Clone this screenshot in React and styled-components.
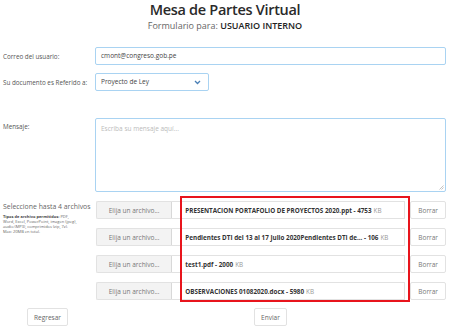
import React from "react";
import styled, { createGlobalStyle } from "styled-components";

const Global = createGlobalStyle`
  html, body { margin: 0; padding: 0; background: #fff; }
  body { font-family: "Open Sans", "Noto Sans", Arial, sans-serif; color: #555; }
  * { box-sizing: border-box; }
`;

const Page = styled.div`
  width: 450px;
  height: 334px;
  position: relative;
  overflow: hidden;
`;

const Header = styled.header`
  text-align: center;
`;

const Title = styled.h1`
  margin: 0;
  font-size: 14.5px;
  letter-spacing: -0.3px;
  line-height: 20px;
  font-weight: 600;
  color: #2a2a2a;
`;

const Subtitle = styled.div`
  font-size: 9px;
  line-height: 12.3px;
  color: #666;
  b { color: #222; font-weight: 600; }
`;

const Form = styled.div`
  display: grid;
  grid-template-columns: 95px 351px;
  margin-top: 15px;
`;

const Label = styled.div`
  padding-left: 3px;
  font-size: 6.3px;
  line-height: 9px;
  color: #555;
  padding-top: ${(p) => p.$pt || 0}px;
  margin-top: ${(p) => p.$mt || 0}px;
`;

const Cell = styled.div`
  margin-top: ${(p) => p.$mt || 0}px;
`;

const Input = styled.div`
  height: 18px;
  border: 1px solid #a9d3f2;
  border-radius: 2px;
  font-size: 6.5px;
  line-height: 16px;
  padding-left: 5px;
  color: #444;
  width: ${(p) => p.$w || "100%"};
  display: flex;
  align-items: center;
  justify-content: space-between;
  padding-right: 7px;
`;

const TextArea = styled.div`
  height: 74px;
  border: 1px solid #a9d3f2;
  border-radius: 2px;
  font-size: 6.5px;
  padding: 5px 5px;
  color: #bbb;
  position: relative;
`;

const Grip = styled.svg`
  position: absolute;
  right: 1px;
  bottom: 1px;
`;

const FilesLabel = styled.div`
  padding-left: 3px;
  margin-top: 10px;
`;

const FilesTitle = styled.div`
  font-size: 6.9px;
  line-height: 10px;
  color: #666;
  white-space: nowrap;
`;

const FineText = styled.div`
  margin-top: 3px;
  font-size: 4px;
  line-height: 4.8px;
  color: #666;
  white-space: nowrap;
  b { color: #444; font-weight: 700; }
`;

const FileList = styled.div`
  margin-top: 9px;
  display: flex;
  flex-direction: column;
  gap: 9px;
  position: relative;
`;

const FileRow = styled.div`
  display: flex;
  height: 18px;
`;

const ChooseBtn = styled.div`
  width: 77px;
  margin-left: 1px;
  background: #f3f3f3;
  border: 1px solid #e2e2e2;
  border-right: 1px solid #d8d8d8;
  border-radius: 2px 0 0 2px;
  font-size: 6.5px;
  color: #777;
  display: flex;
  align-items: center;
  justify-content: center;
`;

const NameBox = styled.div`
  width: 235px;
  border: 1px solid #e2e2e2;
  border-left: none;
  padding-left: 13px;
  font-size: 6.3px;
  font-weight: 700;
  color: #333;
  display: flex;
  align-items: center;
  white-space: nowrap;
  overflow: hidden;
  span { font-weight: 400; color: #999; margin-left: 2px; }
`;

const SmallBtn = styled.div`
  margin-left: 5px;
  width: 36px;
  height: 18px;
  border: 1px solid #e2e2e2;
  border-radius: 2px;
  background: #fff;
  font-size: 6.5px;
  color: #777;
  display: flex;
  align-items: center;
  justify-content: center;
`;

const Highlight = styled.div`
  position: absolute;
  left: 85px;
  top: -5px;
  width: 230px;
  height: 106px;
  border: 2px solid #e8141c;
  pointer-events: none;
`;

const Footer = styled.div`
  display: grid;
  grid-template-columns: 95px 351px;
  margin-top: 8px;
  justify-items: center;
`;

const FootBtn = styled.div`
  height: 18px;
  padding: 0 ${(p) => p.$px}px;
  border: 1px solid #e2e2e2;
  border-radius: 2px;
  font-size: 6.5px;
  color: #666;
  display: flex;
  align-items: center;
`;

const files = [
  ["PRESENTACION PORTAFOLIO DE PROYECTOS 2020.ppt - 4753", "KB"],
  ["Pendientes DTI del 13 al 17 Julio 2020Pendientes DTI de... - 106", "KB"],
  ["test1.pdf - 2000", "KB"],
  ["OBSERVACIONES 01082020.docx - 5980", "KB"],
];

export default function App() {
  return (
    <Page>
      <Global />
      <Header>
        <Title>Mesa de Partes Virtual</Title>
        <Subtitle>
          Formulario para: <b>USUARIO INTERNO</b>
        </Subtitle>
      </Header>
      <Form>
        <Label $pt={5}>Correo del usuario:</Label>
        <Cell>
          <Input>cmont@congreso.gob.pe</Input>
        </Cell>
        <Label $mt={8} $pt={5}>Su documento es Referido a:</Label>
        <Cell $mt={8}>
          <Input $w="114px">
            Proyecto de Ley
            <svg width="7" height="5" viewBox="0 0 7 5">
              <path d="M1 1 L3.5 3.5 L6 1" fill="none" stroke="#4a7fb5" strokeWidth="1.3" />
            </svg>
          </Input>
        </Cell>
        <Label $mt={27} $pt={4}>Mensaje:</Label>
        <Cell $mt={27}>
          <TextArea>
            Escriba su mensaje aquí...
            <Grip width="5" height="5" viewBox="0 0 5 5">
              <path d="M4.5 0.5 L0.5 4.5 M4.5 2.5 L2.5 4.5" stroke="#aaa" strokeWidth="0.7" />
            </Grip>
          </TextArea>
        </Cell>
        <FilesLabel>
          <FilesTitle>Seleccione hasta 4 archivos</FilesTitle>
          <FineText>
            <b>Tipos de archivo permitidos:</b> PDF,
            <br />
            Word, Excel, PowerPoint, imagen (jpeg),
            <br />
            audio (MP3), comprimidos (zip, 7z).
            <br />
            Max: 20MB en total.
          </FineText>
        </FilesLabel>
        <FileList>
          {files.map(([n, u]) => (
            <FileRow key={n}>
              <ChooseBtn>Elija un archivo...</ChooseBtn>
              <NameBox>
                {n} <span>{u}</span>
              </NameBox>
              <SmallBtn>Borrar</SmallBtn>
            </FileRow>
          ))}
          <Highlight />
        </FileList>
      </Form>
      <Footer>
        <FootBtn $px={6}>Regresar</FootBtn>
        <FootBtn $px={6}>Enviar</FootBtn>
      </Footer>
    </Page>
  );
}
